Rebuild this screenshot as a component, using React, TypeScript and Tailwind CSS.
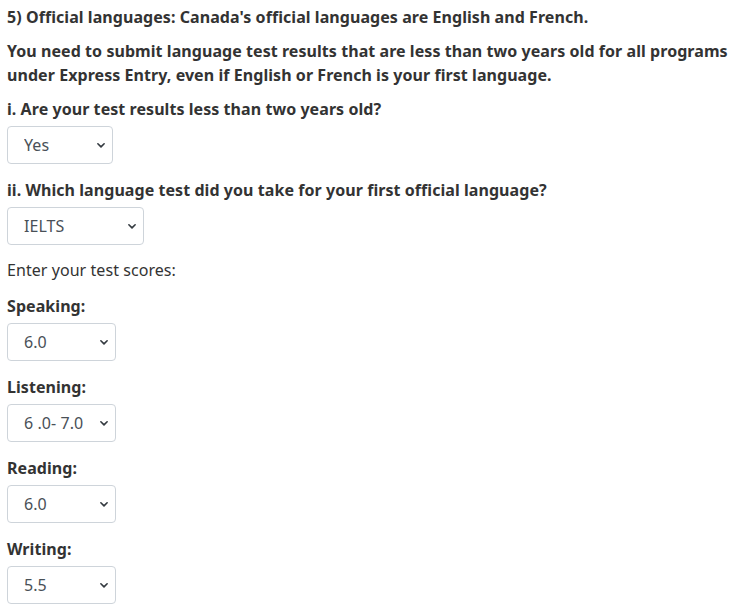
import React, { useState } from 'react';

interface FieldSelectProps {
  value: string;
  options: string[];
  width: string;
}

const Chevron = () => (
  <svg
    className="pointer-events-none absolute right-[7px] top-1/2 -translate-y-1/2"
    width="10"
    height="10"
    viewBox="0 0 16 16"
    fill="none"
    stroke="#343a40"
    strokeWidth="2.6"
    strokeLinecap="round"
    strokeLinejoin="round"
  >
    <path d="M3 6l5 5 5-5" />
  </svg>
);

const FieldSelect: React.FC<FieldSelectProps> = ({ value, options, width }) => {
  const [val, setVal] = useState(value);
  return (
    <div className={`relative ${width}`}>
      <select
        value={val}
        onChange={(e) => setVal(e.target.value)}
        className="h-[38px] w-full appearance-none rounded-[4px] border border-[#ced4da] bg-white pl-4 pr-8 text-[16px] text-[#495057] outline-none"
      >
        {options.map((o) => (
          <option key={o} value={o}>
            {o}
          </option>
        ))}
      </select>
      <Chevron />
    </div>
  );
};

const scores = ['4.0', '4.5', '5.0', '5.5', '6.0', '6.5', '7.0', '7.5', '8.0'];

export default function App() {
  return (
    <div
      className="min-h-screen bg-white px-[7px] pt-[5px] text-[16px] leading-[24px] tracking-[0.06px] text-[#333333]"
      style={{ fontFamily: '"Noto Sans", "Open Sans", sans-serif' }}
    >
      <p className="font-bold">5) Official languages: Canada's official languages are English and French.</p>
      <p className="mt-[10px] font-bold">
        You need to submit language test results that are less than two years old for all programs under Express
        Entry, even if English or French is your first language.
      </p>

      <p className="mt-[10px] font-bold">i. Are your test results less than two years old?</p>
      <div className="mt-[5px]">
        <FieldSelect value="Yes" options={['Yes', 'No']} width="w-[106px]" />
      </div>

      <p className="mt-[14px] font-bold">ii. Which language test did you take for your first official language?</p>
      <div className="mt-[5px]">
        <FieldSelect value="IELTS" options={['IELTS', 'CELPIP-G', 'TEF Canada', 'TCF Canada']} width="w-[137px]" />
      </div>

      <p className="mt-[13px]">Enter your test scores:</p>

      <p className="mt-[12px] font-bold">Speaking:</p>
      <div className="mt-[5px]">
        <FieldSelect value="6.0" options={scores} width="w-[109px]" />
      </div>

      <p className="mt-[14px] font-bold">Listening:</p>
      <div className="mt-[5px]">
        <FieldSelect value="6 .0- 7.0" options={['5.5', '6 .0- 7.0', '7.5', '8.0']} width="w-[109px]" />
      </div>

      <p className="mt-[14px] font-bold">Reading:</p>
      <div className="mt-[5px]">
        <FieldSelect value="6.0" options={scores} width="w-[109px]" />
      </div>

      <p className="mt-[14px] font-bold">Writing:</p>
      <div className="mt-[5px]">
        <FieldSelect value="5.5" options={scores} width="w-[109px]" />
      </div>
    </div>
  );
}
